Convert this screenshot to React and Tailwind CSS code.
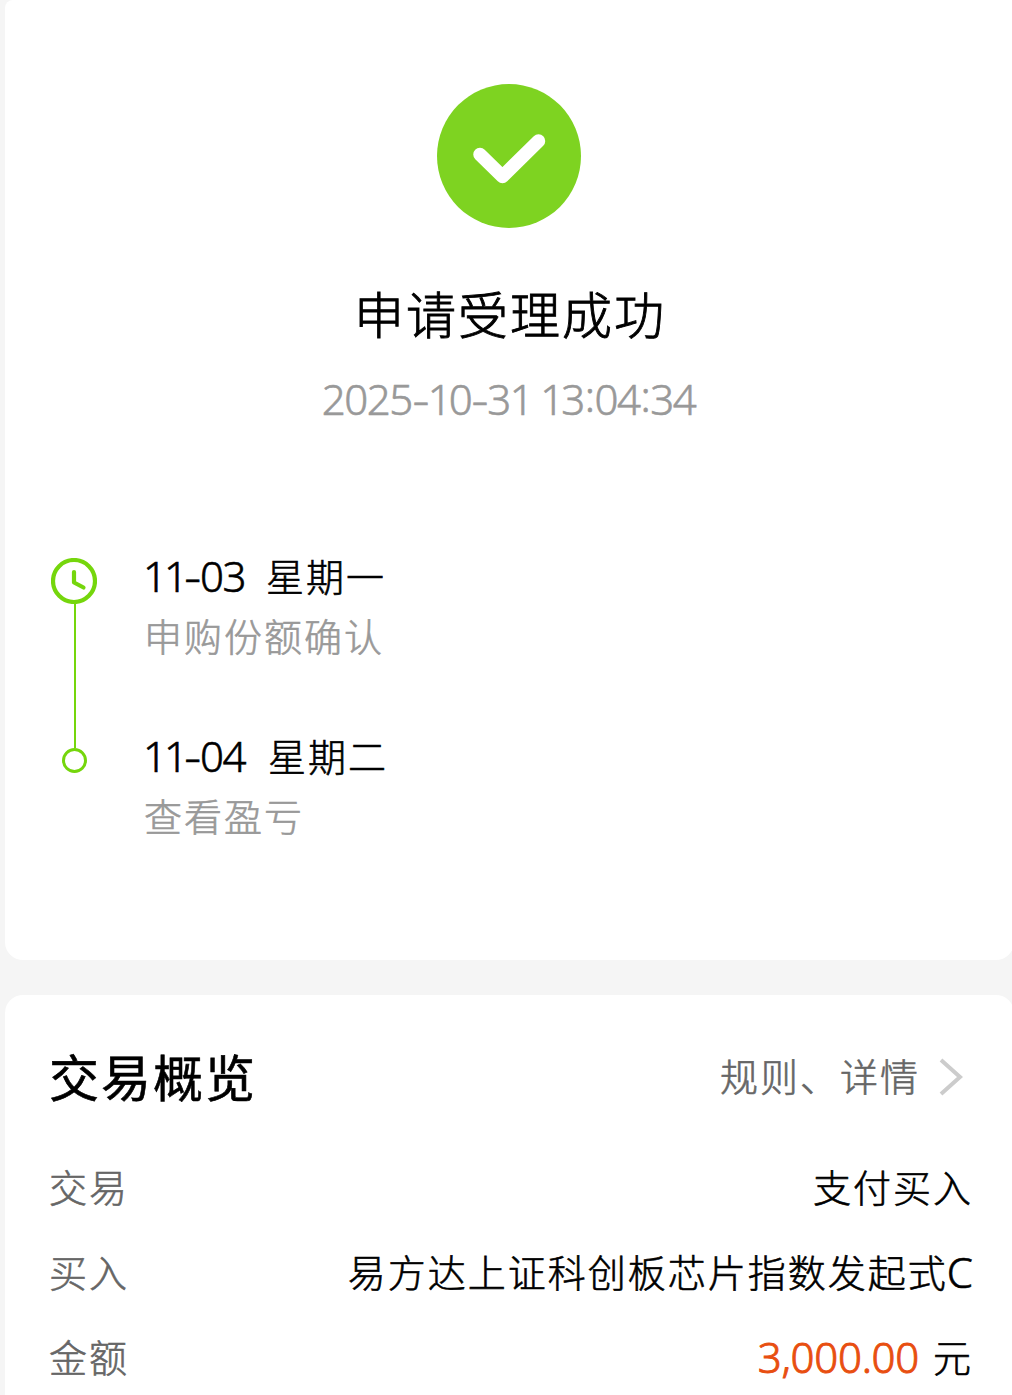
const STEPS = [
  { date: "11-03", day: "星期一", text: "申购份额确认", gap: "w-[122px]" },
  { date: "11-04", day: "星期二", text: "查看盈亏",     gap: "w-[124px]" },
]

const ROWS = [
  { label: "交易", value: "支付买入" },
  { label: "买入", value: "易方达上证科创板芯片指数发起式", suffix: "C" },
  { label: "金额", amount: "3,000.00", value: "元" },
]

// 字距微调：1 收窄、连字符加宽、冒号居中
const KERN = {
  "1": "tracking-[-3px]",
  "-": "mx-[2px] inline-block h-[60px] scale-x-125 align-top",
  ":": "mx-px inline-block h-[60px] leading-[56px] align-top",
}

function Num({ className = "", children }) {
  return (
    <span className={`block h-[60px] whitespace-pre font-['Noto_Sans','Open_Sans',sans-serif] text-[42px] leading-[62px] ${className}`}>
      {children.split(/([1:-])/).map((s, i) => (
        KERN[s] ? <span key={i} className={KERN[s]}>{s}</span> : s
      ))}
    </span>
  )
}

function SuccessIcon() {
  return (
    <svg width="144" height="144" viewBox="0 0 144 144" fill="none">
      <circle cx="72" cy="72" r="72" fill="#7ed321" />
      <path d="M43 70.5 65.5 92.5 101.5 57" stroke="#fff" strokeWidth="13.5" strokeLinecap="round" strokeLinejoin="round" />
    </svg>
  )
}

function ClockIcon() {
  return (
    <svg width="46" height="46" viewBox="0 0 46 46" fill="none" stroke="#75d60c" className="block">
      <circle cx="23" cy="23" r="21" strokeWidth="4.2" />
      <path d="M23 14V24.5L32.5 29.5" strokeWidth="4.2" strokeLinecap="round" strokeLinejoin="round" />
    </svg>
  )
}

export default function App() {
  return (
    <div className="h-[1395px] w-[1012px] overflow-hidden bg-[#f5f5f5] pl-[5px] font-['Noto_Sans_CJK_SC',sans-serif] text-[38px] font-light leading-[60px] tracking-[2px] text-black [-webkit-text-stroke:0.6px]">

      {/* 受理结果 */}
      <section className="h-[960px] w-[1009px] rounded-b-[18px] rounded-tl-[8px] bg-white pr-[2px] pt-[84px]">
        <div className="flex flex-col items-center">
          <SuccessIcon />
          <h1 className="ml-[3px] mt-[46px] text-[50px] leading-[76px] [-webkit-text-stroke:0.9px]">申请受理成功</h1>
          <Num className="mt-[18px] tracking-[-1.5px] text-[#999]">2025-10-31 13:04:34</Num>
        </div>

        {/* 时间轴 */}
        <div className="mt-[117px] flex pl-[46px]">
          <div className="flex w-[46px] flex-col items-center pt-[13px]">
            <ClockIcon />
            <div className="ml-[2px] h-[144px] w-[2px] bg-[#75d60c]" />
            <div className="ml-px size-[25px] rounded-full border-[3px] border-[#75d60c]" />
          </div>
          <div className="ml-[47px] space-y-[60px]">
            {STEPS.map(({ date, day, text, gap }) => (
              <div key={date}>
                <div className="flex items-center">
                  <Num className={`${gap} -indent-px tracking-[-1.5px]`}>{date}</Num>
                  <span>{day}</span>
                </div>
                <p className="text-[#999]">{text}</p>
              </div>
            ))}
          </div>
        </div>
      </section>

      {/* 交易概览 */}
      <section className="mt-[35px] h-[420px] w-[1009px] rounded-t-[18px] bg-white pl-[44px] pr-[41px] pt-[42px]">
        <div className="flex h-[76px] items-center justify-between">
          <h2 className="text-[50px] font-normal leading-[76px]">交易概览</h2>
          <div className="flex items-center pr-[10px] text-[#666]">
            <span>规则、详情</span>
            <svg width="24" height="38" viewBox="0 0 24 38" fill="none" className="ml-[19px] mt-[4px]">
              <path d="M2 2 21 19 2 36" stroke="#ccc" strokeWidth="4" />
            </svg>
          </div>
        </div>

        <div className="mt-[43px] space-y-[25px]">
          {ROWS.map(({ label, value, suffix, amount }) => (
            <div key={label} className="flex items-center justify-between">
              <span className="text-[#666]">{label}</span>
              <div className="flex items-center">
                {amount && <Num className="mr-[14px] tracking-[-0.3px] text-[#e84e10] [-webkit-text-stroke:0.9px]">{amount}</Num>}
                <span>{value}</span>
                {suffix && <Num className="-ml-px tracking-[0px]">{suffix}</Num>}
              </div>
            </div>
          ))}
        </div>
      </section>
    </div>
  )
}
